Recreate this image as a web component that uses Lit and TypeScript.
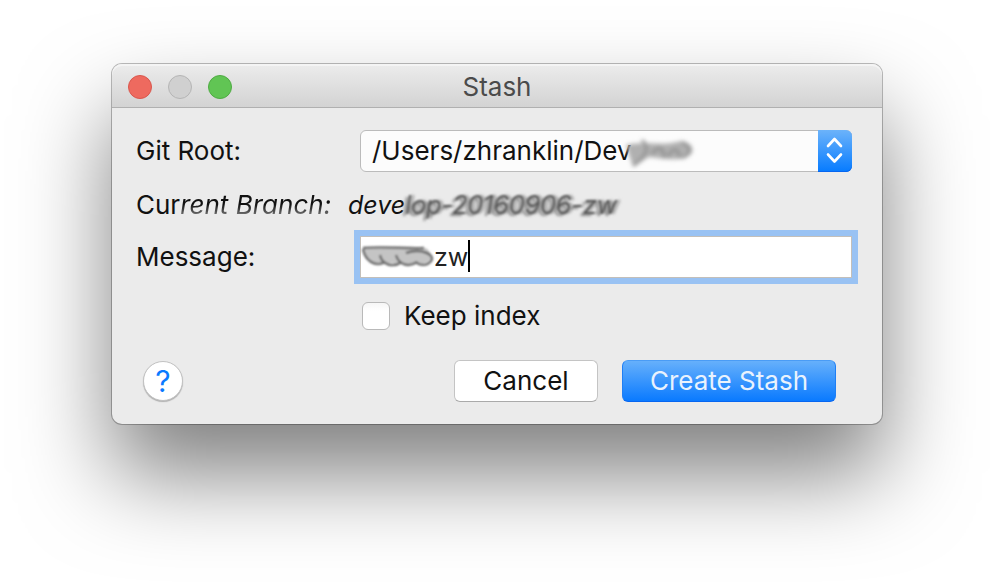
import { LitElement, html, css } from "lit";
import { customElement } from "lit/decorators.js";

@customElement("app-root")
export class AppRoot extends LitElement {
  static styles = css`
    :host {
      display: block;
      box-sizing: border-box;
      min-height: 100vh;
      padding: 64px 112px;
      background: #fff;
      overflow: hidden;
      font-family: Inter, "Liberation Sans", sans-serif;
      font-size: 26px;
      line-height: 32px;
      color: #111;
    }
    * { box-sizing: border-box; }
    button, input, select { font: inherit; color: inherit; margin: 0; }
    .window {
      border-radius: 10px;
      background: #ebebeb;
      box-shadow: 0 0 0 1px rgba(0, 0, 0, 0.26), 0 50px 90px rgba(0, 0, 0, 0.5);
    }
    .titlebar {
      display: grid;
      grid-template-columns: 1fr auto 1fr;
      align-items: center;
      height: 44px;
      padding: 2px 16px 0;
      border-radius: 10px 10px 0 0;
      border-bottom: 1px solid #b0b0b0;
      background: linear-gradient(#ececec, #d3d3d3);
      box-shadow: inset 0 2px 0 #f4f4f4;
    }
    .lights { display: flex; gap: 16px; }
    .light {
      width: 24px;
      height: 24px;
      padding: 0;
      border: 1px solid #b5b5b5;
      border-radius: 50%;
      background: #d0d0d0;
    }
    .close { background: #ee6a5f; border-color: #d9574d; }
    .zoom { background: #61c554; border-color: #4fab43; }
    .title { margin: 0; font-size: 26px; font-weight: 400; color: #4b4b4b; }
    .body {
      display: flex;
      flex-direction: column;
      padding: 22px 30px 22px 24px;
    }
    .form {
      display: grid;
      grid-template-columns: 224px 1fr;
      align-items: center;
    }
    .field { position: relative; display: flex; }
    .picker {
      appearance: none;
      width: 100%;
      height: 42px;
      padding: 0 44px 0 11px;
      border: 1px solid #bbb;
      border-radius: 6px;
      background: #fcfcfc;
    }
    .stepper {
      position: absolute;
      right: 0;
      top: 0;
      width: 34px;
      height: 42px;
      border-radius: 0 6px 6px 0;
      background: linear-gradient(#6cb3fa, #067bff);
      box-shadow: inset 0 -1px 0 #0766f0;
      pointer-events: none;
    }
    .smudge { position: absolute; pointer-events: none; overflow: visible; }
    .root-smudge { left: 256px; top: 4px; }
    .message-smudge { left: 0; top: 0; }
    .branch-label, .branch { height: 64px; padding-top: 17px; white-space: nowrap; }
    .smear {
      font-style: italic;
      color: transparent;
      background: linear-gradient(#111 50%, #777 85%);
      background-clip: text;
    }
    .branch-name { margin-left: -12px; font-size: 25px; font-style: italic; }
    .soft {
      color: #555;
      text-shadow: -3px 2px 2px #888, 3px 0 2px #999;
      filter: blur(1px);
    }
    .message {
      width: 100%;
      height: 42px;
      padding: 0 0 0 73px;
      border: 1px solid #c3bfba;
      border-radius: 0;
      background: #fff;
      outline: 6px solid #99c2f3;
      font-size: 25px;
      color: #222;
    }
    .caret {
      position: absolute;
      left: 108px;
      top: 4px;
      width: 2px;
      height: 32px;
      background: #000;
      pointer-events: none;
    }
    .check {
      grid-column: 2;
      display: flex;
      align-items: center;
      gap: 14px;
      height: 32px;
      margin: 22px 0 0 2px;
    }
    .box {
      appearance: none;
      width: 28px;
      height: 28px;
      border: 1px solid #b9b9b9;
      border-radius: 6px;
      background: linear-gradient(#f6f6f6, #fff 8px);
    }
    .footer {
      display: flex;
      align-items: center;
      gap: 24px;
      margin-top: 28px;
      padding: 0 16px 0 7px;
    }
    .help {
      width: 40px;
      height: 40px;
      margin-right: auto;
      padding: 0;
      border: 1px solid #c2c2c2;
      border-radius: 50%;
      background: #fff;
      box-shadow: 0 1px 1px rgba(0, 0, 0, 0.25);
      font-size: 30px;
      color: #0a7aff;
    }
    .btn {
      height: 42px;
      padding: 0;
      border: 1px solid #c4c4c4;
      border-bottom-color: #aaa;
      border-radius: 6px;
      background: #fff;
    }
    .cancel { width: 144px; }
    .primary {
      width: 214px;
      border-color: #4a9cf5 #1f7ff5 #0766f0;
      background: linear-gradient(#66b0fb, #0a7aff);
      color: #e9f2fd;
    }
  `;

  render() {
    return html`
      <main class="window">
        <header class="titlebar">
          <div class="lights">
            <button class="light close" aria-label="Close"></button>
            <button class="light" aria-label="Minimize" disabled></button>
            <button class="light zoom" aria-label="Zoom"></button>
          </div>
          <h1 class="title">Stash</h1>
        </header>
        <form class="body" @submit=${(e: Event) => e.preventDefault()}>
          <div class="form">
            <label for="root">Git Root:</label>
            <div class="field">
              <select id="root" class="picker">
                <option>/Users/zhranklin/Dev</option>
              </select>
              <svg class="smudge root-smudge" width="80" height="34" viewBox="0 0 80 34" fill="none" aria-hidden="true">
                <defs><filter id="b1" x="-20%" y="-20%" width="140%" height="140%"><feGaussianBlur stdDeviation="2" /></filter></defs>
                <g filter="url(#b1)">
                  <path d="M10 11 C30 7 50 12 60 8 C72 6 80 13 75 20 C66 28 48 25 34 23 C28 24 20 34 16 30Z" fill="#b0b0b0" />
                  <path d="M17 32 C27 25 36 15 26 6M36 20 C42 11 48 13 48 24M52 23C56 13 64 13 63 24M65 8C74 11 78 19 66 24" stroke="#888" stroke-width="2.4" />
                </g>
              </svg>
              <svg class="stepper" viewBox="0 0 34 42" fill="none" stroke="#fff" stroke-width="2.6" stroke-linecap="round" stroke-linejoin="round" aria-hidden="true">
                <path d="M10 16 L16.500 9 L23 16M10 24.500 L16.500 31.500 L23 24.500" />
              </svg>
            </div>
            <div class="branch-label">Cur<span class="smear">rent Branch:</span></div>
            <div class="branch"><div class="branch-name">deve<span class="soft">lop-20160906-zw</span></div></div>
            <label for="message">Message:</label>
            <div class="field">
              <input id="message" class="message" type="text" value="zw" />
              <svg class="smudge message-smudge" width="76" height="42" viewBox="0 0 76 42" fill="none" aria-hidden="true">
                <defs><filter id="b2" x="-20%" y="-20%" width="140%" height="140%"><feGaussianBlur stdDeviation="1.3" /></filter></defs>
                <g filter="url(#b2)">
                  <path d="M3 12 C20 10 50 12 66 12 C76 20 70 27 62 28 L16 27 C8 24 4 20 3 12Z" fill="#c4c4c4" />
                  <path d="M3 12C24 10 46 13 64 12M3 13C5 24 15 32 25 26M20 19C22 29 33 32 42 26M36 19C39 30 50 31 57 26M46 17C60 12 76 18 71 25C67 30 60 30 56 26" stroke="#6a6a6a" stroke-width="2.4" />
                </g>
              </svg>
              <span class="caret"></span>
            </div>
            <label class="check"><input class="box" type="checkbox" />Keep index</label>
          </div>
          <div class="footer">
            <button class="help" type="button" aria-label="Help">?</button>
            <button class="btn cancel" type="button">Cancel</button>
            <button class="btn primary" type="submit">Create Stash</button>
          </div>
        </form>
      </main>
    `;
  }
}
